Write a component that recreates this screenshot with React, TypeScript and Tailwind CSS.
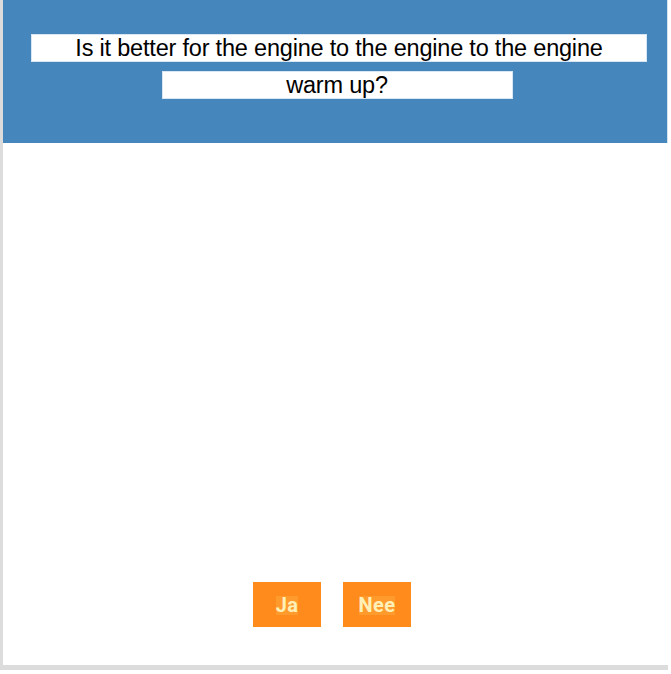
import React from 'react';

const answers = ['Ja', 'Nee'];

const App: React.FC = () => {
  return (
    <div className="w-[671px] h-[674px] bg-white overflow-hidden">
      <div className="w-[668px] h-[670px] flex flex-col border-l-[3px] border-b-[5px] border-[#dcdcdc] bg-white">
        <div className="h-[143px] bg-[#4587bc] flex flex-col items-center pt-[34px] gap-[9px] border-r border-[#cfe3f3]">
          <div className="w-[616px] h-[28px] ml-[8px] pt-[2px] bg-white border border-[#d7e6f2] flex items-center justify-center text-[23.5px] tracking-[-0.2px] text-black font-['Liberation_Sans',Arial,sans-serif]">
            Is it better for the engine to the engine to the engine
          </div>
          <div className="w-[351px] h-[28px] ml-[4px] pt-[2px] bg-white border border-[#d7e6f2] flex items-center justify-center text-[23.5px] tracking-[-0.2px] text-black font-['Liberation_Sans',Arial,sans-serif]">
            warm up?
          </div>
        </div>
        <div className="flex-1 flex items-end justify-center gap-[22px] pb-[38px] pr-[7px]">
          {answers.map((a) => (
            <button
              key={a}
              className="w-[68px] h-[45px] pt-[2px] bg-[#ff8b1c] flex items-center justify-center"
            >
              <span className="bg-[#ff9a2c] text-[#fff0b8] font-bold text-[20px] leading-[19px] tracking-[0.4px] font-['Roboto',sans-serif]">
                {a}
              </span>
            </button>
          ))}
        </div>
      </div>
    </div>
  );
};

export default App;
